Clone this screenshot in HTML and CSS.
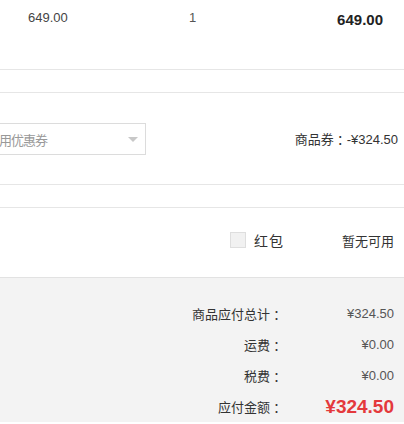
FILE: index.html
```html
<!DOCTYPE html>
<html lang="zh">
<head>
<meta charset="utf-8">
<link rel="stylesheet" href="styles.css">
</head>
<body>
<div class="page">
  <div class="item-row">
    <span class="price">649.00</span>
    <span class="qty">1</span>
    <span class="subtotal">649.00</span>
  </div>
  <div class="spacer"></div>
  <div class="coupon-row">
    <div class="select">
      <span class="select-text">使用优惠券</span>
      <span class="arrow"></span>
    </div>
    <div class="coupon-amount">商品券<span class="colon">：</span>-¥324.50</div>
  </div>
  <div class="spacer"></div>
  <div class="red-row">
    <label class="check"><span class="box"></span><span class="check-label">红包</span></label>
    <span class="none">暂无可用</span>
  </div>
  <div class="summary">
    <div class="sum-row"><span class="label">商品应付总计<span class="colon">：</span></span><span class="value">¥324.50</span></div>
    <div class="sum-row"><span class="label">运费<span class="colon">：</span></span><span class="value">¥0.00</span></div>
    <div class="sum-row"><span class="label">税费<span class="colon">：</span></span><span class="value">¥0.00</span></div>
    <div class="sum-row"><span class="label">应付金额<span class="colon">：</span></span><span class="value total">¥324.50</span></div>
  </div>
</div>
</body>
</html>
```
FILE: styles.css
```css
html, body {
  margin: 0;
  padding: 0;
  background: #fff;
}
body {
  font-family: "Liberation Sans", Arial, "Noto Sans CJK SC", sans-serif;
  color: #333;
  font-size: 13px;
  width: 404px;
  height: 424px;
  overflow: hidden;
}
.page {
  display: flex;
  flex-direction: column;
}
.item-row {
  border-bottom: 1px solid #e6e6e6;
  display: flex;
  align-items: flex-start;
  box-sizing: border-box;
  height: 70px;
  padding-top: 10px;
}
.price {
  margin-left: 28px;
  width: 161px;
  font-size: 13px;
  color: #444;
  line-height: 16px;
}
.qty {
  font-size: 13px;
  color: #555;
  line-height: 16px;
}
.subtotal {
  margin-left: auto;
  margin-right: 21px;
  font-size: 15px;
  font-weight: bold;
  color: #222;
  line-height: 18px;
  margin-top: 1px;
}
.spacer {
  height: 22px;
  border-bottom: 1px solid #e6e6e6;
}
.coupon-row {
  height: 92px;
  box-sizing: border-box;
  border-bottom: 1px solid #e6e6e6;
  display: flex;
  align-items: flex-start;
  padding-top: 30px;
}
.select {
  margin-left: -24px;
  width: 170px;
  height: 32px;
  box-sizing: border-box;
  border: 1px solid #dcdcdc;
  display: flex;
  align-items: center;
  font-family: "Noto Sans CJK SC", sans-serif;
  font-size: 13px;
  color: #999;
}
.select-text {
  margin-left: 10px;
  letter-spacing: -1px;
}
.arrow {
  margin-left: auto;
  margin-right: 7px;
  width: 0;
  height: 0;
  border-left: 5px solid transparent;
  border-right: 5px solid transparent;
  border-top: 5px solid #c8c8c8;
}
.coupon-amount {
  margin-left: auto;
  margin-right: 6px;
  margin-top: 6px;
  font-size: 13px;
  color: #333;
  font-family: "Liberation Sans", "Noto Sans CJK SC", sans-serif;
}
.colon {
  display: inline-block;
  width: 1em;
  text-align: center;
  font-family: "Noto Sans CJK SC", sans-serif;
  font-feature-settings: "halt";
}
.red-row {
  height: 69px;
  box-sizing: border-box;
  display: flex;
  align-items: center;
  justify-content: flex-end;
  padding-right: 10px;
  padding-bottom: 5px;
  font-family: "Noto Sans CJK SC", sans-serif;
}
.check {
  display: flex;
  align-items: center;
}
.box {
  width: 16px;
  height: 16px;
  box-sizing: border-box;
  border: 1px solid #dedede;
  background: #f1f1f1;
  margin-right: 8px;
}
.check-label {
  font-size: 14px;
  color: #333;
  letter-spacing: 1px;
}
.none {
  margin-left: 58px;
  font-size: 13px;
  color: #333;
}
.summary {
  flex: 1;
  background: #f3f3f3;
  border-top: 1px solid #e2e2e2;
  padding-top: 20px;
}
.sum-row {
  display: grid;
  grid-template-columns: 283px 111px;
  height: 31px;
  line-height: 31px;
}
.label {
  text-align: right;
  font-family: "Noto Sans CJK SC", sans-serif;
  font-size: 13px;
  color: #333;
}
.value {
  text-align: right;
  font-size: 13px;
  color: #555;
}
.value.total {
  font-size: 19px;
  font-weight: bold;
  color: #e4393c;
}
```
